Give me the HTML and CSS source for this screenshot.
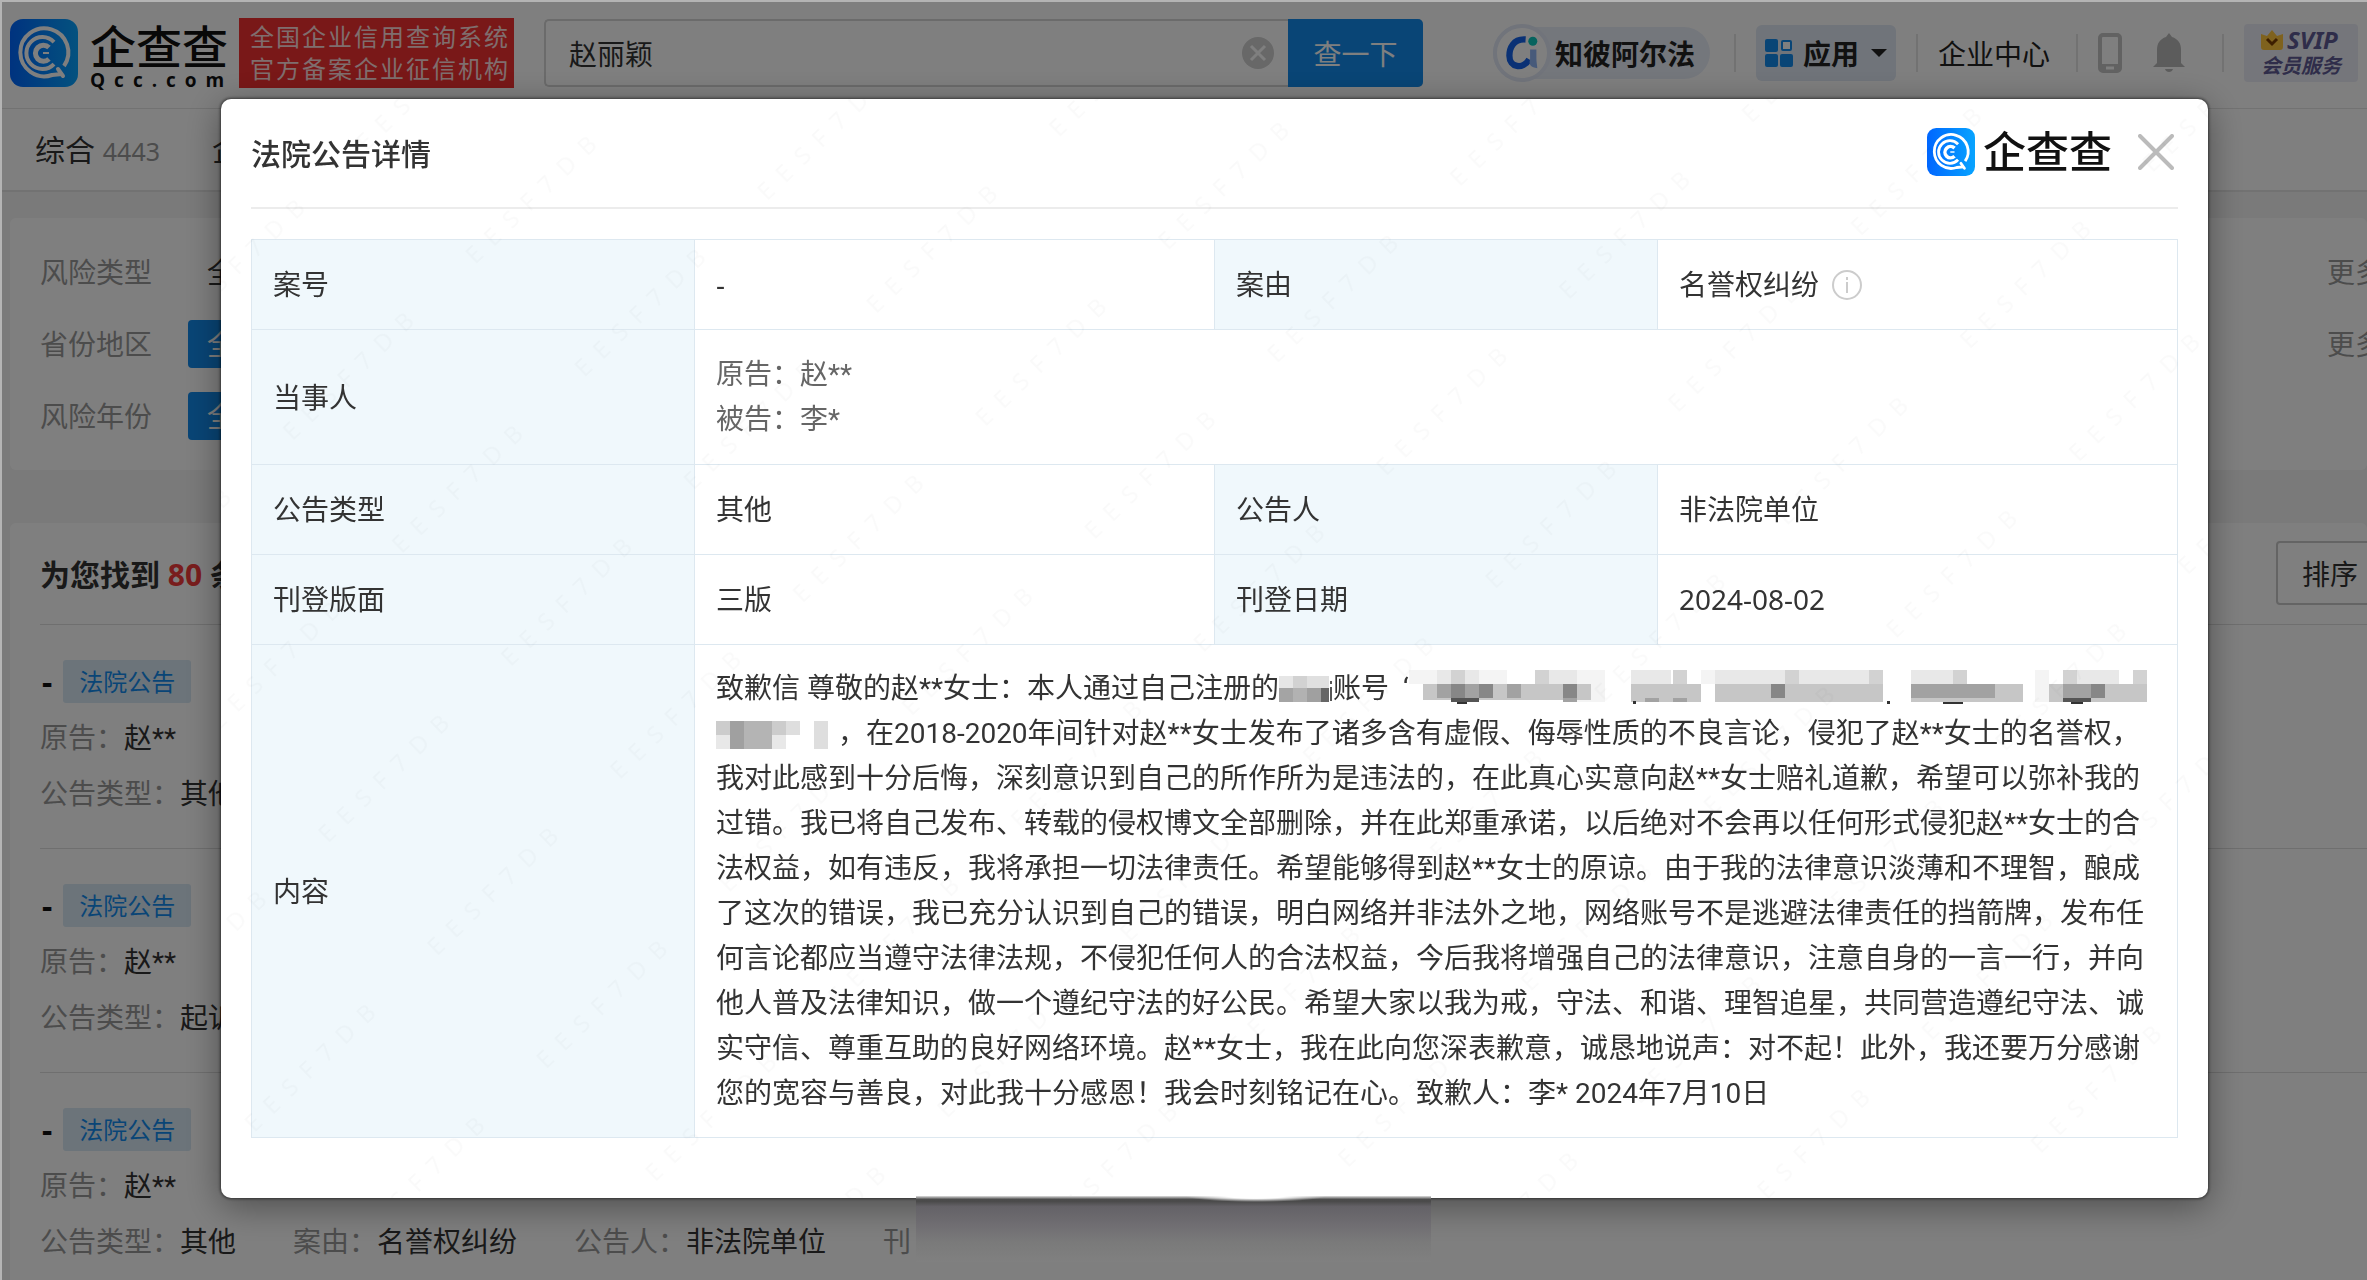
FILE: index.html
```html
<!DOCTYPE html>
<html lang="zh-CN">
<head>
    <meta charset="UTF-8">
    <meta name="viewport" content="width=device-width, initial-scale=1.0">
    <title>企查查 - 法院公告详情</title>
    <link rel="stylesheet" href="styles.css">
</head>
<body>
    <!-- shared shapes -->
    <svg class="defs" width="0" height="0" aria-hidden="true">
        <defs>
            <linearGradient id="brand-blue" x1="0" y1="0" x2="1" y2="0">
                <stop offset="0" stop-color="#0066ff"/>
                <stop offset="1" stop-color="#08a4ff"/>
            </linearGradient>
            <symbol id="qcc" viewBox="0 0 68 68">
                <rect width="68" height="68" rx="13" fill="url(#brand-blue)"/>
                <g fill="none" stroke="#fff" stroke-width="4">
                    <path d="M54 47A24 24 0 1 0 42 56L52 55" stroke-linejoin="round"/>
                    <path d="M48 50L53 57" stroke-linecap="round"/>
                    <path d="M44 23A16 16 0 1 0 44 45"/>
                    <path d="M39 28.500A8 8 0 1 0 39 40" stroke-width="5"/>
                    <path d="M33 34h6" stroke-width="2"/>
                </g>
            </symbol>
        </defs>
    </svg>

    <div class="page">
        <header class="top-bar">
            <a href="#" class="logo">
                <svg class="logo-icon"><use href="#qcc"/></svg>
                <span class="logo-text">
                    <span class="logo-name">企查查</span>
                    <span class="logo-domain">Qcc.com</span>
                </span>
            </a>
            <p class="slogan">全国企业信用查询系统<br>官方备案企业征信机构</p>
            <form class="search">
                <input type="text" class="search-input" value="赵丽颖" aria-label="搜索">
                <button type="button" class="search-clear" aria-label="清空">
                    <svg viewBox="0 0 32 32"><circle cx="16" cy="16" r="16" fill="#d0d0d0"/><path d="M9 9l14 14M23 9L9 23" stroke="#fff" stroke-width="3"/></svg>
                </button>
                <button type="button" class="search-btn">查一下</button>
            </form>
            <nav class="top-nav">
                <a href="#" class="alpha">
                    <span class="alpha-icon">
                        <svg viewBox="0 0 36 40">
                            <path d="M22 5C8 4 4 15 4 23c0 13 15 16 22 4" fill="none" stroke="#1463ea" stroke-width="7"/>
                            <path d="M27 16h7v10c0 4 1 8 1 11-7-1-10-4-8-10z" fill="#8fb4f5"/>
                            <circle cx="30" cy="7" r="5" fill="#0cc7bd"/>
                        </svg>
                    </span>
                    知彼阿尔法
                </a>
                <button type="button" class="apps">
                    <svg class="apps-icon" viewBox="0 0 28 28" fill="#128bed">
                        <rect width="13" height="13" rx="2"/>
                        <rect y="15" width="13" height="13" rx="2"/>
                        <rect x="15" y="15" width="13" height="13" rx="2"/>
                        <rect x="17" y="2" width="9" height="9" rx="1" fill="#fff" stroke="#128bed" stroke-width="2"/>
                    </svg>
                    应用
                    <svg class="caret" viewBox="0 0 16 8"><path d="M0 0h16L8 8z" fill="#222"/></svg>
                </button>
                <a href="#" class="center-link">企业中心</a>
                <span class="tools">
                    <a href="#" aria-label="手机版">
                        <svg width="24" height="40" viewBox="0 0 24 40"><rect x="2" y="2" width="20" height="36" rx="3" fill="none" stroke="#c4c4c4" stroke-width="4"/><path d="M2 31h20v6H2z" fill="#c4c4c4"/><path d="M8 35h8" stroke="#fff" stroke-width="3"/></svg>
                    </a>
                    <a href="#" aria-label="消息">
                        <svg width="32" height="40" viewBox="0 0 32 40" fill="#b8b8b8"><path d="M16 0l3 4c6 2 9 6 9 13v13l4 4H0l4-4V17c0-7 3-11 9-13z"/><path d="M12 36h8c-1 4-7 4-8 0z"/></svg>
                    </a>
                </span>
                <a href="#" class="svip">
                    <span class="svip-top">
                        <svg width="22" height="20" viewBox="0 0 22 20"><path d="M0 4l6 2 5-6 5 6 6-2v13q0 3-3 3H3q-3 0-3-3z" fill="#ffc53d"/><path d="M6 9l5 5 5-5" fill="none" stroke="#7a3d00" stroke-width="3"/></svg>
                        SVIP
                    </span>
                    会员服务
                </a>
            </nav>
        </header>

        <nav class="tabs">
            <a href="#">综合 <span>4443</span></a>
            <a href="#">企业</a>
        </nav>

        <main>
            <section class="card filters">
                <div class="filter-row">
                    <span class="filter-name">风险类型</span>
                    <a href="#" class="filter-option">全部</a>
                    <a href="#" class="more">更多</a>
                </div>
                <div class="filter-row">
                    <span class="filter-name">省份地区</span>
                    <a href="#" class="filter-option active">全部</a>
                    <a href="#" class="more">更多</a>
                </div>
                <div class="filter-row">
                    <span class="filter-name">风险年份</span>
                    <a href="#" class="filter-option active">全部</a>
                </div>
            </section>

            <section class="card results">
                <div class="results-head">
                    <h2>为您找到 <em>80</em> 条</h2>
                    <button type="button" class="sort">排序</button>
                </div>
                <article class="item">
                    <h3>- <span class="tag">法院公告</span></h3>
                    <p><span>原告：<b>赵**</b></span></p>
                    <p><span>公告类型：<b>其他</b></span></p>
                </article>
                <article class="item">
                    <h3>- <span class="tag">法院公告</span></h3>
                    <p><span>原告：<b>赵**</b></span></p>
                    <p><span>公告类型：<b>起诉</b></span></p>
                </article>
                <article class="item">
                    <h3>- <span class="tag">法院公告</span></h3>
                    <p><span>原告：<b>赵**</b></span></p>
                    <p>
                        <span>公告类型：<b>其他</b></span>
                        <span>案由：<b>名誉权纠纷</b></span>
                        <span>公告人：<b>非法院单位</b></span>
                        <span>刊</span>
                    </p>
                </article>
            </section>
        </main>
    </div>

    <div class="mask">
        <div class="modal" role="dialog" aria-labelledby="modal-title">
            <div class="modal-head">
                <h1 id="modal-title">法院公告详情</h1>
                <span class="modal-brand">
                    <svg class="modal-icon"><use href="#qcc"/></svg>
                    企查查
                </span>
                <button type="button" class="close" aria-label="关闭">
                    <svg viewBox="0 0 36 36"><path d="M2 2l32 32M34 2L2 34" stroke="#bbb" stroke-width="4" stroke-linecap="round"/></svg>
                </button>
            </div>

            <table class="detail">
                <colgroup>
                    <col class="col-name"><col class="col-value"><col class="col-name"><col class="col-value">
                </colgroup>
                <tr>
                    <th>案号</th>
                    <td>-</td>
                    <th>案由</th>
                    <td>
                        <span class="reason">名誉权纠纷
                            <svg width="32" height="32" viewBox="0 0 32 32"><circle cx="16" cy="16" r="14" fill="none" stroke="#ccc" stroke-width="2"/><path d="M16 13v11M16 8v3" stroke="#ccc" stroke-width="2"/></svg>
                        </span>
                    </td>
                </tr>
                <tr>
                    <th>当事人</th>
                    <td colspan="3" class="party">原告：赵**<br>被告：李*</td>
                </tr>
                <tr>
                    <th>公告类型</th>
                    <td>其他</td>
                    <th>公告人</th>
                    <td>非法院单位</td>
                </tr>
                <tr>
                    <th>刊登版面</th>
                    <td>三版</td>
                    <th>刊登日期</th>
                    <td>2024-08-02</td>
                </tr>
                <tr>
                    <th>内容</th>
                    <td colspan="3" class="letter">
                        致歉信 尊敬的赵**女士：本人通过自己注册的<svg class="mosaic" width="54" height="32" viewBox="0 0 54 32">
                            <path d="M0 4h14v12H0z" fill="#e6e6e6"/><path d="M14 4h14v12H14z" fill="#d2d2d2"/><path d="M28 4h22v12H28z" fill="#e0e0e0"/>
                            <path d="M0 16h14v14H0z" fill="#a4a4a4"/><path d="M14 16h14v14H14z" fill="#b2b2b2"/><path d="M28 16h14v14H28z" fill="#a0a0a0"/><path d="M42 16h8v14h-8z" fill="#666"/>
                            <path d="M51 9h2v3h-2zM51 15h2v14h-2z" fill="#555"/>
                        </svg>账号&nbsp; ‘<svg class="mosaic" width="738" height="34" viewBox="0 0 738 34">
                            <path d="M0 0h28v14H0zM70 0h28v14H70zM168 0h28v32h-28zM292 0h28v14h-28zM626 0h14v32h-14z" fill="#f4f4f4"/>
                            <path d="M28 0h14v14H28zM56 0h14v14H56zM140 0h28v14h-28zM222 0h40v14h-40zM306 0h70v14h-70zM390 0h70v14h-70zM502 0h56v14h-56zM668 0h42v14h-42z" fill="#e8e8e8"/>
                            <path d="M42 0h14v14H42zM126 0h14v14h-14zM264 0h14v14h-14zM376 0h14v14h-14zM460 0h14v14h-14zM544 0h14v14h-14zM654 0h14v14h-14zM724 0h14v14h-14z" fill="#d2d2d2"/>
                            <path d="M14 14h168v16H14zM222 14h70v18h-70zM306 14h168v18H306zM502 14h112v18H502zM640 14h98v18h-98z" fill="#c6c6c6"/>
                            <path d="M28 14h14v14H28zM56 14h14v14H56zM98 14h14v14H98zM502 14h84v14h-84zM654 14h28v18h-28zM154 28h14v4h-14zM236 28h14v4h-14zM264 28h14v4h-14z" fill="#a2a2a2"/>
                            <path d="M42 14h14v14H42zM70 14h14v14H70zM154 14h14v14h-14zM362 14h14v14h-14zM682 14h14v14h-14z" fill="#878787"/>
                            <path d="M42 28h28v4H42zM654 28h28v4h-28z" fill="#555"/>
                            <path d="M48 32h10v2H48zM224 31h3v3h-3zM478 31h3v3h-3zM534 32h20v2h-20zM662 32h12v2h-12z" fill="#333"/>
                        </svg><br>
                        <svg class="mosaic" width="122" height="34" viewBox="0 0 122 34">
                            <path d="M0 6h14v14H0zM56 6h14v14H56z" fill="#ccc"/><path d="M14 6h14v28H14z" fill="#a0a0a0"/><path d="M28 6h28v28H28z" fill="#b4b4b4"/><path d="M70 6h14v14H70zM98 6h14v28H98z" fill="#dedede"/><path d="M0 20h14v14H0zM56 20h14v14H56z" fill="#e8e8e8"/>
                        </svg>，在2018-2020年间针对赵**女士发布了诸多含有虚假、侮辱性质的不良言论，侵犯了赵**女士的名誉权，<br>
                        我对此感到十分后悔，深刻意识到自己的所作所为是违法的，在此真心实意向赵**女士赔礼道歉，希望可以弥补我的<br>
                        过错。我已将自己发布、转载的侵权博文全部删除，并在此郑重承诺，以后绝对不会再以任何形式侵犯赵**女士的合<br>
                        法权益，如有违反，我将承担一切法律责任。希望能够得到赵**女士的原谅。由于我的法律意识淡薄和不理智，酿成<br>
                        了这次的错误，我已充分认识到自己的错误，明白网络并非法外之地，网络账号不是逃避法律责任的挡箭牌，发布任<br>
                        何言论都应当遵守法律法规，不侵犯任何人的合法权益，今后我将增强自己的法律意识，注意自身的一言一行，并向<br>
                        他人普及法律知识，做一个遵纪守法的好公民。希望大家以我为戒，守法、和谐、理智追星，共同营造遵纪守法、诚<br>
                        实守信、尊重互助的良好网络环境。赵**女士，我在此向您深表歉意，诚恳地说声：对不起！此外，我还要万分感谢<br>
                        您的宽容与善良，对此我十分感恩！我会时刻铭记在心。致歉人：李* 2024年7月10日
                    </td>
                </tr>
            </table>

            <svg class="watermark" width="100%" height="100%" aria-hidden="true">
                <defs>
                    <pattern id="wm" width="254" height="157" patternUnits="userSpaceOnUse" patternTransform="translate(52 328) rotate(-44)">
                        <text x="4" y="24" font-size="24" letter-spacing="12">EESF7DB</text>
                    </pattern>
                </defs>
                <rect width="100%" height="100%" fill="url(#wm)"/>
            </svg>
        </div>
        <div class="smudge"></div>
    </div>
</body>
</html>
```

FILE: styles.css
```css
:root {
    --blue: #128bed;
    --text: #333;
    --muted: #999;
    --line: #dde8f0;
}

* {
    margin: 0;
    padding: 0;
    box-sizing: border-box;
}

html, body {
    height: 100%;
    overflow: hidden;
}

body {
    background: #f4f4f4;
    color: var(--text);
    font-family: "Noto Sans", "Noto Sans CJK SC", sans-serif;
    font-size: 28px;
}

a {
    color: inherit;
    text-decoration: none;
}

button, input {
    font: inherit;
    color: inherit;
    border: 0;
    background: none;
}

svg {
    display: block;
}

.defs {
    position: absolute;
}

.page {
    height: 100vh;
    overflow: hidden;
    white-space: nowrap;
}

/* top bar */
.top-bar {
    display: flex;
    align-items: center;
    height: 109px;
    padding: 0 9px 3px 10px;
    background: #fff;
    border-bottom: 1px solid #e4e4e4;
}

.logo {
    display: flex;
    align-items: center;
    gap: 12px;
    color: #111;
}

.logo-icon {
    width: 68px;
    height: 68px;
}

.logo-text {
    display: flex;
    flex-direction: column;
    width: 139px;
    padding-top: 6px;
}

.logo-name {
    font-size: 46px;
    font-weight: 500;
    line-height: 48px;
}

.logo-domain {
    font-family: "Open Sans", sans-serif;
    font-size: 19px;
    font-weight: 700;
    line-height: 20px;
    letter-spacing: 9px;
}

.slogan {
    margin-left: 10px;
    width: 275px;
    padding: 3px 0 3px 11px;
    background: #f23030;
    color: #ffdcdc;
    font-size: 24px;
    line-height: 32px;
    letter-spacing: 2px;
}

.search {
    display: flex;
    align-items: center;
    flex: 1;
    height: 68px;
    margin-left: 30px;
    border: 2px solid #d6d6d6;
    border-right: 0;
    border-radius: 5px;
}

.search-input {
    flex: 1;
    min-width: 0;
    height: 64px;
    padding-left: 23px;
    outline: 0;
}

.search-clear {
    width: 32px;
    height: 32px;
    margin-right: 14px;
}

.search-btn {
    width: 135px;
    height: 68px;
    border-radius: 0 5px 5px 0;
    background: var(--blue);
    color: #fff;
}

.top-nav {
    display: flex;
    align-items: center;
    margin-left: 70px;
    color: #222;
}

.top-nav > * + * {
    position: relative;
}

.top-nav > * + *::before {
    content: '';
    position: absolute;
    left: -22px;
    top: 50%;
    width: 2px;
    height: 38px;
    margin-top: -19px;
    background: #e4e4e4;
}

.alpha {
    display: flex;
    align-items: center;
    gap: 4px;
    height: 52px;
    padding-right: 15px;
    border-radius: 26px;
    background: #e9eef8;
    font-weight: 700;
}

.alpha-icon {
    display: grid;
    place-items: center;
    width: 58px;
    height: 58px;
    border: 4px solid #e2e8f6;
    border-radius: 50%;
    background: #fff;
}

.alpha-icon svg {
    width: 36px;
    height: 36px;
}

.apps {
    display: flex;
    align-items: center;
    gap: 10px;
    height: 56px;
    margin-left: 46px;
    padding: 0 9px;
    border-radius: 6px;
    background: #e0e8f4;
    font-weight: 700;
}

.apps-icon {
    width: 28px;
    height: 28px;
}

.caret {
    width: 16px;
    height: 8px;
    margin-left: 2px;
}

.center-link {
    margin-left: 42px;
}

.tools {
    display: flex;
    align-items: center;
    gap: 31px;
    margin-left: 48px;
}

.svip {
    margin-left: 59px;
    width: 114px;
    padding: 3px 0 3px 17px;
    border-radius: 4px;
    background: #ebecf6;
    color: #5f5b94;
    font-size: 20px;
    font-style: italic;
    font-weight: 700;
    line-height: 26px;
}

.svip-top {
    display: flex;
    align-items: center;
    gap: 4px;
    font-size: 24px;
}

/* tabs */
.tabs {
    display: flex;
    gap: 52px;
    height: 83px;
    padding-left: 35px;
    background: #fff;
    border-bottom: 2px solid #e4e4e4;
    font-size: 30px;
    line-height: 82px;
}

.tabs span {
    color: var(--muted);
    font-size: 25px;
}

/* search results */
.card {
    margin: 26px 0 0 10px;
    padding-left: 30px;
    background: #fff;
    border-radius: 6px;
}

.filters {
    display: flex;
    flex-direction: column;
    gap: 24px;
    padding-top: 30px;
    padding-bottom: 30px;
}

.filter-row {
    display: flex;
    line-height: 48px;
}

.filter-name,
.more {
    color: var(--muted);
}

.filter-option {
    margin-left: 36px;
    padding: 0 19px;
    border-radius: 4px;
}

.filter-option.active {
    background: var(--blue);
    color: #fff;
}

.more {
    margin-left: auto;
    margin-right: -16px;
}

.results {
    height: 900px;
    margin-top: 53px;
}

.results-head {
    display: flex;
    align-items: center;
    justify-content: space-between;
    height: 102px;
    padding-bottom: 2px;
    border-bottom: 1px solid #dedede;
}

.results-head h2 {
    font-size: 30px;
}

.results-head em {
    color: #f23a3a;
    font-style: normal;
}

.sort {
    height: 64px;
    margin-right: -23px;
    padding: 0 30px 0 24px;
    border: 2px solid #c8c8c8;
    border-radius: 4px;
}

.item {
    height: 224px;
    padding-top: 35px;
    border-bottom: 1px solid #dedede;
    font-family: Roboto, "Noto Sans CJK SC", sans-serif;
}

.item h3 {
    display: flex;
    align-items: center;
    gap: 11px;
    margin-bottom: 8px;
    padding-left: 2px;
    font-family: "Noto Sans", "Noto Sans CJK SC", sans-serif;
    font-size: 32px;
    line-height: 43px;
    color: #111;
}

.tag {
    padding: 0 16px;
    border-radius: 3px;
    background: #d8e8f5;
    color: var(--blue);
    font-size: 24px;
    font-weight: 400;
}

.item p {
    display: flex;
    gap: 57px;
    line-height: 56px;
    color: var(--muted);
}

.item b {
    color: var(--text);
    font-weight: 400;
}

/* modal */
.mask {
    position: fixed;
    inset: 0;
    display: flex;
    align-items: flex-start;
    padding: 99px 159px 0 221px;
    background: rgba(0, 0, 0, 0.5);
    box-shadow: inset 2px 2px 0 #b4b4b4;
}

.modal {
    position: relative;
    flex: 1;
    padding: 0 30px 60px;
    border-radius: 10px;
    background: #fff;
    box-shadow: 0 0 3px 1px rgba(0, 0, 0, 0.5), 0 8px 36px rgba(0, 0, 0, 0.4);
}

.modal-head {
    display: flex;
    align-items: center;
    height: 110px;
    margin-bottom: 30px;
    padding-bottom: 2px;
    border-bottom: 2px solid #ececec;
}

.modal-head h1 {
    flex: 1;
    font-size: 30px;
    font-weight: 500;
}

.modal-brand {
    display: flex;
    align-items: center;
    gap: 8px;
    margin-right: 26px;
    color: #111;
    font-size: 43px;
    font-weight: 500;
    line-height: 48px;
}

.modal-icon {
    width: 48px;
    height: 48px;
}

.close {
    width: 36px;
    height: 36px;
    margin-right: 4px;
}

.detail {
    width: 100%;
    table-layout: fixed;
    border-collapse: collapse;
    line-height: 45px;
}

.col-name {
    width: 23%;
}

.col-value {
    width: 27%;
}

.detail th,
.detail td {
    padding: 22px 0 22px 21px;
    border: 1px solid var(--line);
    text-align: left;
    font-weight: 400;
}

.detail th {
    background: #f0f8fc;
}

.detail .party,
.detail .letter {
    font-family: Roboto, "Noto Sans CJK SC", sans-serif;
}

.detail .party {
    color: #666;
}

.reason {
    display: flex;
    align-items: center;
    gap: 12px;
}

.detail .letter {
    padding-top: 21px;
    padding-bottom: 21px;
    white-space: nowrap;
}

.mosaic {
    display: inline-block;
    vertical-align: -6px;
}

.watermark {
    position: absolute;
    inset: 0;
    opacity: 0.02;
    pointer-events: none;
}

/* smeared strip across the lower edge of the dialog */
.smudge {
    position: absolute;
    left: 916px;
    top: 1196px;
    width: 515px;
    height: 66px;
    background:
        radial-gradient(ellipse 70px 6px at 66% 0, #fff 40%, transparent),
        linear-gradient(#e0e0e0, #4c4c4c 5%, #4a4a4a 8%, #646267 16%, #706e72 45%, #7a7a7a 70%, #808080);
}
```
